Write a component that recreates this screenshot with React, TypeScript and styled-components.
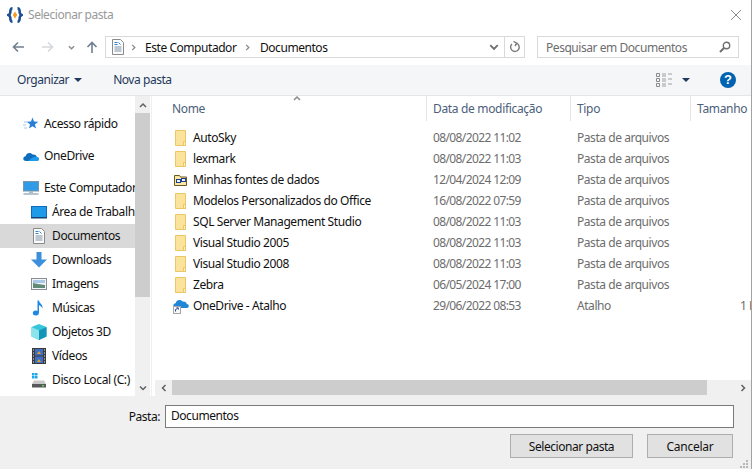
import styled, { createGlobalStyle } from 'styled-components'

const GlobalStyle = createGlobalStyle`
  html, body {
    margin: 0;
    padding: 0;
    background: #ffffff;
  }
  * {
    box-sizing: border-box;
  }
`

const Dialog = styled.div`
  position: relative;
  width: 752px;
  height: 469px;
  overflow: hidden;
  display: flex;
  flex-direction: column;
  background: #ffffff;
  border-right: 1px solid #a3a3a3;
  color: #000000;
  font-family: 'Noto Sans', 'Open Sans', sans-serif;
  font-size: 12px;
  letter-spacing: -0.45px;
  white-space: nowrap;
`

const TitleBar = styled.div`
  height: 30px;
  padding: 0 10px 0 7px;
  display: flex;
  align-items: center;
  gap: 5px;
  color: #999999;
`

const TitleText = styled.span`
  flex: 1;
  margin-bottom: 2px;
`

const NavBar = styled.div`
  height: 35px;
  padding: 6px 13px 7px 0;
  display: flex;
  align-items: center;
`

const NavButtons = styled.div`
  width: 105px;
  flex: none;
  position: relative;
  height: 22px;
  display: flex;
  align-items: center;
  padding-left: 12px;
`

const NavSlot = styled.span<{ $w: number }>`
  width: ${(p) => p.$w}px;
  flex: none;
  display: flex;
  align-items: center;
`

const AddressBox = styled.div`
  width: 420px;
  height: 22px;
  flex: none;
  border: 1px solid #d9d9d9;
  display: flex;
  align-items: center;
  padding-left: 4px;
`

const Crumb = styled.span<{ $w: number }>`
  width: ${(p) => p.$w}px;
  flex: none;
  color: #111111;
`

const CrumbArrow = styled.span<{ $left: number; $w: number }>`
  width: ${(p) => p.$w}px;
  margin-left: ${(p) => p.$left}px;
  flex: none;
  display: flex;
`

const AddressFill = styled.span`
  flex: 1;
`

const AddressTail = styled.span`
  width: 20px;
  height: 100%;
  flex: none;
  display: flex;
  align-items: center;
  justify-content: center;
`

const RefreshCell = styled(AddressTail)`
  border-left: 1px solid #d9d9d9;
`

const SearchBox = styled.div`
  width: 202px;
  height: 22px;
  margin-left: 12px;
  flex: none;
  border: 1px solid #d9d9d9;
  display: flex;
  align-items: center;
  justify-content: space-between;
  padding: 0 7px 0 8px;
  color: #6d6d6d;
`

const ToolBar = styled.div`
  height: 31px;
  padding: 0 15px 1px 17px;
  display: flex;
  align-items: center;
  background: #f5f6f7;
  border-bottom: 1px solid #e6e6e6;
  color: #1e395b;
`

const ToolLabel = styled.span`
  flex: none;
`

const Caret = styled.span<{ $left: number }>`
  width: 0;
  height: 0;
  margin-left: ${(p) => p.$left}px;
  flex: none;
  border-left: 4px solid transparent;
  border-right: 4px solid transparent;
  border-top: 4px solid #1e395b;
`

const NewFolder = styled(ToolLabel)`
  margin-left: 31px;
`

const ToolFill = styled.span`
  flex: 1;
`

const HelpBadge = styled.span`
  width: 16px;
  height: 16px;
  margin-left: 30px;
  flex: none;
  border-radius: 50%;
  background: #0063b1;
  color: #ffffff;
  font-family: 'Liberation Sans', sans-serif;
  font-size: 13px;
  font-weight: 700;
  letter-spacing: 0;
  line-height: 16px;
  text-align: center;
`

const Main = styled.div`
  height: 300px;
  display: flex;
  flex: none;
`

const Sidebar = styled.nav`
  width: 135px;
  flex: none;
  padding-top: 16px;
  overflow: hidden;
`

const TreeItem = styled.div<{ $child?: boolean; $selected?: boolean; $gap?: boolean }>`
  height: 24px;
  margin-top: ${(p) => (p.$gap ? 8 : 0)}px;
  padding-left: ${(p) => (p.$child ? 31 : 23)}px;
  padding-bottom: 2px;
  display: flex;
  align-items: center;
  gap: 5px;
  background: ${(p) => (p.$selected ? '#d9d9d9' : 'transparent')};
  color: #111111;
  letter-spacing: -0.38px;
`

const TreeIcon = styled.span`
  width: 16px;
  height: 16px;
  margin-top: 2px;
  flex: none;
  display: flex;
`

const VScroll = styled.div`
  width: 15px;
  flex: none;
  display: flex;
  flex-direction: column;
  background: #f0f0f0;
`

const ScrollEnd = styled.div<{ $w?: number }>`
  width: ${(p) => p.$w ?? 15}px;
  height: ${(p) => (p.$w ? 15 : 17)}px;
  flex: none;
  display: flex;
  align-items: center;
  justify-content: center;
`

const VThumb = styled.div`
  height: 184px;
  flex: none;
  background: #cdcdcd;
`

const VTrack = styled.div`
  flex: 1;
`

const FilePane = styled.section`
  margin-left: 1px;
  flex: 1;
  min-width: 0;
  display: flex;
  flex-direction: column;
  border-left: 1px solid #f0f0f0;
  padding-left: 2px;
`

const Columns = styled.div`
  position: relative;
  display: grid;
  grid-template-columns: 273px 144px 120px 100px;
  flex: none;
`

const HeaderRow = styled(Columns)`
  height: 25px;
  color: #4c607a;
  letter-spacing: -0.33px;
`

const HeaderCell = styled.div<{ $first?: boolean }>`
  padding-left: ${(p) => (p.$first ? 18 : 6)}px;
  border-right: 1px solid #e5e5e5;
  line-height: 25px;
  overflow: hidden;
`

const SortMark = styled.span`
  position: absolute;
  left: 139px;
  top: -2px;
  display: flex;
`

const FileList = styled.div`
  flex: 1;
  padding-top: 6px;
  overflow: hidden;
`

const FileRow = styled(Columns)`
  height: 21px;
  line-height: 21px;
  color: #6d6d6d;
`

const NameCell = styled.div`
  padding-left: 19px;
  display: flex;
  align-items: center;
  gap: 4px;
  color: #111111;
  letter-spacing: -0.4px;
`

const DateCell = styled.div`
  padding-left: 6px;
  overflow: hidden;
  letter-spacing: -0.62px;
`

const TypeCell = styled.div`
  padding-left: 6px;
  overflow: hidden;
`

const SizeCell = styled.div`
  padding-left: 49px;
  overflow: hidden;
`

const HScroll = styled.div`
  height: 16px;
  margin-left: 1px;
  flex: none;
  display: flex;
  background: #f0f0f0;
`

const HThumb = styled.div`
  width: 535px;
  height: 15px;
  flex: none;
  background: #cdcdcd;
`

const Footer = styled.footer`
  flex: 1;
  background: #f0f0f0;
  padding: 9px 17px 0 0;
  display: flex;
  flex-direction: column;
`

const PathRow = styled.div`
  height: 23px;
  display: flex;
  align-items: center;
  gap: 5px;
`

const PathLabel = styled.label`
  width: 160px;
  text-align: right;
  color: #111111;
`

const PathInput = styled.div`
  flex: 1;
  height: 23px;
  padding-left: 5px;
  line-height: 19px;
  background: #ffffff;
  border: 1px solid #7a7a7a;
  color: #111111;
`

const ButtonRow = styled.div`
  margin-top: 6px;
  padding-right: 1px;
  display: flex;
  justify-content: flex-end;
  gap: 14px;
`

const DialogButton = styled.button<{ $w: number; $tight?: boolean }>`
  width: ${(p) => p.$w}px;
  height: 24px;
  padding: 0;
  background: #e1e1e1;
  border: 1px solid #adadad;
  font: inherit;
  letter-spacing: ${(p) => (p.$tight ? '-0.45px' : '-0.25px')};
  color: #111111;
`

const Grip = styled.svg`
  position: absolute;
  right: 2px;
  bottom: 0;
`

const Chevron = ({ dir, color = '#6b6b6b', size = 8 }: { dir: 'up' | 'down' | 'left' | 'right'; color?: string; size?: number }) => {
  const d = {
    up: 'M1 6l3-3 3 3',
    down: 'M1 2.500l3 3 3-3',
    left: 'M5.500 1l-3 3 3 3',
    right: 'M2.500 1l3 3-3 3',
  }[dir]
  return (
    <svg width={size} height={size} viewBox="0 0 8 8" fill="none" stroke={color} strokeWidth="1.500">
      <path d={d} />
    </svg>
  )
}

const Arrow = ({ dir, color }: { dir: 'left' | 'right' | 'up'; color: string }) => {
  const d = {
    left: 'M12 6H1.500M6 1.500L1.500 6 6 10.500',
    right: 'M0 6h10.500M6 1.500L10.500 6 6 10.500',
    up: 'M6 12V1.500M1.500 6L6 1.500 10.500 6',
  }[dir]
  return (
    <svg width="12" height="12" viewBox="0 0 12 12" fill="none" stroke={color} strokeWidth="1.600">
      <path d={d} />
    </svg>
  )
}

const AppLogo = () => (
  <svg width="16" height="16" viewBox="0 0 16 16">
    <path d="M5.500 1.300C2.600 1.300 3.600 5 3.100 6.300 2.800 7.200 2 7.700 1.300 8c.7.300 1.500.8 1.800 1.700.5 1.300-.5 5 2.400 5" fill="none" stroke="#1d4f91" strokeWidth="2.600" />
    <path d="M10.500 1.300c2.900 0 1.900 3.700 2.400 5 .3.900 1.100 1.400 1.800 1.700-.7.300-1.500.8-1.800 1.700-.5 1.300.5 5-2.400 5" fill="none" stroke="#1d4f91" strokeWidth="2.600" />
    <path d="M8 4.500L10.200 8 8 11.500 5.800 8z" fill="#f59a23" />
  </svg>
)

const DocIcon = ({ size = 16 }: { size?: number }) => (
  <svg width={size} height={size} viewBox="0 0 16 16">
    <path d="M2.500.5h8l3 3v12h-11z" fill="#fbfbfb" stroke="#8a8a8a" />
    <path d="M4.500 3.500h3M4.500 5.500h3" stroke="#2f86d6" />
    <path d="M4.500 8h7M4.500 10h7M4.500 12h7" stroke="#7c93a8" />
    <path d="M8.500 3.500l2 2" stroke="#2f86d6" />
  </svg>
)

const FolderIcon = () => (
  <svg width="16" height="16" viewBox="0 0 16 16">
    <path d="M2.500 .5h10v15h-10z" fill="#fce39b" stroke="#eac766" />
    <path d="M10.500 11.500h2v4h-2z" fill="#fff0c0" stroke="#eac766" />
  </svg>
)

const DataFolderIcon = () => (
  <svg width="16" height="16" viewBox="0 0 16 16">
    <path d="M1.500 3.500h5l1 1.500h6v8.500h-12z" fill="#fbe6a5" stroke="#6a5a20" />
    <rect x="3.500" y="7.500" width="4" height="3" fill="#f4f4f4" stroke="#1d3d8f" />
    <rect x="8.500" y="6.500" width="4" height="3" fill="#f4f4f4" stroke="#1d3d8f" />
  </svg>
)

const CloudIcon = () => (
  <svg width="16" height="16" viewBox="0 0 16 16">
    <path d="M3.200 13C1.500 13 .3 12 .3 10.700S1.300 8.400 2.600 8.300C3 6.200 4.700 5 6.500 5c1.300 0 2.400.6 3.100 1.600C11.800 6 13.500 7.300 13.800 9c1.200.1 2 .9 2 2s-.8 2-2 2z" fill="#0f6cbd" />
    <path d="M5 13l4.600-3.400c1.500-1.100 3-1 4.200-.6 1.200.1 2 .9 2 2s-.8 2-2 2z" fill="#1e9be8" />
  </svg>
)

const StarIcon = () => (
  <svg width="16" height="16" viewBox="0 0 16 16">
    <path d="M9.500 1.500l1.500 4 4.300.2-3.400 2.700 1.200 4.200-3.600-2.400-3.600 2.400 1.200-4.200-3.400-2.700 4.300-.2z" fill="#2a7fd4" />
    <path d="M1 6h3M0 9h3M1 12h3" stroke="#9ccbf0" />
  </svg>
)

const ComputerIcon = () => (
  <svg width="16" height="16" viewBox="0 0 16 16">
    <rect x=".5" y="1.500" width="15" height="9.500" fill="#2f9ae6" stroke="#7a94aa" />
    <path d="M6 11h4v2H6z" fill="#a7bccb" />
    <path d="M.5 14h15" stroke="#9cb0c0" strokeWidth="1.500" />
  </svg>
)

const DesktopIcon = () => (
  <svg width="16" height="16" viewBox="0 0 16 16">
    <rect x=".5" y="2.500" width="15" height="11" fill="#1e9be8" stroke="#0f6cbd" />
    <path d="M0 13h16v1.500H0z" fill="#11446f" />
  </svg>
)

const DownloadIcon = () => (
  <svg width="16" height="16" viewBox="0 0 16 16">
    <path d="M5.500 0h5v7.500H16L8 15.500 0 7.500h5.500z" fill="#3b8fdc" />
  </svg>
)

const PicturesIcon = () => (
  <svg width="16" height="16" viewBox="0 0 16 16">
    <rect x=".5" y="2.500" width="15" height="11" fill="#f4f4f4" stroke="#8a8f96" />
    <path d="M2 4h12v3H2z" fill="#a9c8e8" />
    <path d="M2 7l5 1 7 1v3H2z" fill="#5f8a78" />
  </svg>
)

const MusicIcon = () => (
  <svg width="16" height="16" viewBox="0 0 16 16">
    <ellipse cx="4.800" cy="13" rx="3" ry="2.500" fill="#1e88e5" />
    <path d="M6.500 13V.5h1.500c.3 3 4 3.500 3.500 8-.8-2-2.600-3-3.500-3.300V13z" fill="#1e88e5" />
  </svg>
)

const CubeIcon = () => (
  <svg width="16" height="16" viewBox="0 0 16 16">
    <path d="M8 0l7.500 3v9.500L8 16 .5 12.500V3z" fill="#37c6d9" />
    <path d="M8 6.500l7.500-3.500v9.500L8 16z" fill="#1595b5" />
    <path d="M.5 3L8 6.500V16L.5 12.500z" fill="#8be3ec" />
  </svg>
)

const VideoIcon = () => (
  <svg width="16" height="16" viewBox="0 0 16 16">
    <rect x="1" y="0" width="14" height="16" fill="#3b3b3b" />
    <rect x="4" y="1" width="8" height="6.500" fill="#3f6fc4" />
    <rect x="4" y="8.500" width="8" height="6.500" fill="#3f6fc4" />
    <path d="M6 6l2-3 2 3zM6 14l2-3 2 3z" fill="#d9a326" />
    <path d="M2 2h1M2 5h1M2 8h1M2 11h1M2 14h1M13 2h1M13 5h1M13 8h1M13 11h1M13 14h1" stroke="#e8e8e8" />
  </svg>
)

const DiskIcon = () => (
  <svg width="16" height="16" viewBox="0 0 16 16">
    <path d="M1 1h2.500v2.500H1zM4 1h2.500v2.500H4zM1 4h2.500v2.500H1zM4 4h2.500v2.500H4z" fill="#18a6ee" />
    <path d="M3 8.500h10L15 12H1z" fill="#c9c9c9" />
    <rect x="1" y="12" width="14" height="3.500" fill="#595959" />
    <rect x="11" y="13" width="2" height="1.500" fill="#5fd35f" />
  </svg>
)

const ShortcutCloudIcon = () => (
  <svg width="16" height="16" viewBox="0 0 16 16">
    <path d="M3.200 10C1.500 10 .3 9 .3 7.700S1.300 5.400 2.600 5.300C3 3.200 4.700 2 6.500 2c1.300 0 2.400.6 3.100 1.600C11.800 3 13.500 4.300 13.800 6c1.200.1 2 .9 2 2s-.8 2-2 2z" fill="#1e88d8" />
    <rect x=".5" y="8.500" width="7" height="7" fill="#f6f6f6" stroke="#a7a7a7" />
    <path d="M2.500 13.500v-2l2-1M3.500 9.800h1.800v1.800" fill="none" stroke="#1d4f91" />
  </svg>
)

const ViewsIcon = () => (
  <svg width="16" height="16" viewBox="0 0 16 16" fill="none" stroke="#8a8a8a">
    <path d="M.5 1.500h3v3h-3zM.5 6.500h3v3h-3zM.5 11.500h3v3h-3z" />
    <path d="M6 2h4M6 4h4M6 7h4M6 9h4M6 12h4M6 14h4M12 2h4M12 7h4M12 12h4" stroke="#a0a0a0" />
  </svg>
)

const RefreshIcon = () => (
  <svg width="12" height="12" viewBox="0 0 12 12" fill="none" stroke="#7a7a7a" strokeWidth="1.400">
    <path d="M7.500 2.200A4.300 4.300 0 1 1 3 3" />
    <path d="M4.500.5L7.800 2.200 6 5" />
  </svg>
)

const SearchIcon = () => (
  <svg width="12" height="12" viewBox="0 0 12 12" fill="none" stroke="#6f6f6f">
    <circle cx="7.500" cy="4.500" r="3.200" strokeWidth="1.400" />
    <path d="M5 7L1 11" strokeWidth="2" />
  </svg>
)

const CloseIcon = () => (
  <svg width="10" height="10" viewBox="0 0 10 10" fill="none" stroke="#8f8f8f">
    <path d="M0 0l10 10M10 0L0 10" />
  </svg>
)

const treeItems = [
  { label: 'Acesso rápido', icon: <StarIcon />, gap: false, child: false },
  { label: 'OneDrive', icon: <CloudIcon />, gap: true, child: false },
  { label: 'Este Computador', icon: <ComputerIcon />, gap: true, child: false },
  { label: 'Área de Trabalho', icon: <DesktopIcon />, gap: false, child: true },
  { label: 'Documentos', icon: <DocIcon />, gap: false, child: true, selected: true },
  { label: 'Downloads', icon: <DownloadIcon />, gap: false, child: true },
  { label: 'Imagens', icon: <PicturesIcon />, gap: false, child: true },
  { label: 'Músicas', icon: <MusicIcon />, gap: false, child: true },
  { label: 'Objetos 3D', icon: <CubeIcon />, gap: false, child: true },
  { label: 'Vídeos', icon: <VideoIcon />, gap: false, child: true },
  { label: 'Disco Local (C:)', icon: <DiskIcon />, gap: false, child: true },
]

const files = [
  { name: 'AutoSky', date: '08/08/2022 11:02', type: 'Pasta de arquivos', icon: <FolderIcon /> },
  { name: 'lexmark', date: '08/08/2022 11:03', type: 'Pasta de arquivos', icon: <FolderIcon /> },
  { name: 'Minhas fontes de dados', date: '12/04/2024 12:09', type: 'Pasta de arquivos', icon: <DataFolderIcon /> },
  { name: 'Modelos Personalizados do Office', date: '16/08/2022 07:59', type: 'Pasta de arquivos', icon: <FolderIcon /> },
  { name: 'SQL Server Management Studio', date: '08/08/2022 11:03', type: 'Pasta de arquivos', icon: <FolderIcon /> },
  { name: 'Visual Studio 2005', date: '08/08/2022 11:03', type: 'Pasta de arquivos', icon: <FolderIcon /> },
  { name: 'Visual Studio 2008', date: '08/08/2022 11:03', type: 'Pasta de arquivos', icon: <FolderIcon /> },
  { name: 'Zebra', date: '06/05/2024 17:00', type: 'Pasta de arquivos', icon: <FolderIcon /> },
  { name: 'OneDrive - Atalho', date: '29/06/2022 08:53', type: 'Atalho', size: '1 KB', icon: <ShortcutCloudIcon /> },
]

export default function App() {
  return (
    <Dialog>
      <GlobalStyle />
      <TitleBar>
        <AppLogo />
        <TitleText>Selecionar pasta</TitleText>
        <CloseIcon />
      </TitleBar>

      <NavBar>
        <NavButtons>
          <NavSlot $w={30}><Arrow dir="left" color="#6f7f8f" /></NavSlot>
          <NavSlot $w={26}><Arrow dir="right" color="#d5d9dd" /></NavSlot>
          <NavSlot $w={18}><Chevron dir="down" color="#8a8a8a" size={7} /></NavSlot>
          <NavSlot $w={12}><Arrow dir="up" color="#6f7f8f" /></NavSlot>
        </NavButtons>
        <AddressBox>
          <DocIcon />
          <CrumbArrow $left={4} $w={15}><Chevron dir="right" color="#8a8a8a" size={7} /></CrumbArrow>
          <Crumb $w={89}>Este Computador</Crumb>
          <CrumbArrow $left={10} $w={16}><Chevron dir="right" color="#8a8a8a" size={7} /></CrumbArrow>
          <Crumb $w={80}>Documentos</Crumb>
          <AddressFill />
          <AddressTail><Chevron dir="down" color="#6f6f6f" size={10} /></AddressTail>
          <RefreshCell><RefreshIcon /></RefreshCell>
        </AddressBox>
        <SearchBox>
          <span>Pesquisar em Documentos</span>
          <SearchIcon />
        </SearchBox>
      </NavBar>

      <ToolBar>
        <ToolLabel>Organizar</ToolLabel>
        <Caret $left={5} />
        <NewFolder>Nova pasta</NewFolder>
        <ToolFill />
        <ViewsIcon />
        <Caret $left={10} />
        <HelpBadge>?</HelpBadge>
      </ToolBar>

      <Main>
        <Sidebar>
          {treeItems.map((item) => (
            <TreeItem key={item.label} $child={item.child} $gap={item.gap} $selected={item.selected}>
              <TreeIcon>{item.icon}</TreeIcon>
              {item.label}
            </TreeItem>
          ))}
        </Sidebar>
        <VScroll>
          <ScrollEnd><Chevron dir="up" color="#606060" /></ScrollEnd>
          <VThumb />
          <VTrack />
          <ScrollEnd><Chevron dir="down" color="#606060" /></ScrollEnd>
        </VScroll>
        <FilePane>
          <HeaderRow>
            <HeaderCell $first>Nome</HeaderCell>
            <HeaderCell>Data de modificação</HeaderCell>
            <HeaderCell>Tipo</HeaderCell>
            <HeaderCell>Tamanho</HeaderCell>
            <SortMark><Chevron dir="up" color="#8a8a8a" /></SortMark>
          </HeaderRow>
          <FileList>
            {files.map((file) => (
              <FileRow key={file.name}>
                <NameCell>{file.icon}{file.name}</NameCell>
                <DateCell>{file.date}</DateCell>
                <TypeCell>{file.type}</TypeCell>
                <SizeCell>{file.size}</SizeCell>
              </FileRow>
            ))}
          </FileList>
          <HScroll>
            <ScrollEnd $w={17}><Chevron dir="left" color="#606060" /></ScrollEnd>
            <HThumb />
            <VTrack />
            <ScrollEnd $w={17}><Chevron dir="right" color="#606060" /></ScrollEnd>
          </HScroll>
        </FilePane>
      </Main>

      <Footer>
        <PathRow>
          <PathLabel>Pasta:</PathLabel>
          <PathInput>Documentos</PathInput>
        </PathRow>
        <ButtonRow>
          <DialogButton $w={123} $tight>Selecionar pasta</DialogButton>
          <DialogButton $w={86}>Cancelar</DialogButton>
        </ButtonRow>
      </Footer>

      <Grip width="10" height="10" viewBox="0 0 10 10" fill="#b8b8b8">
        <path d="M7 1h2v2H7zM4 4h2v2H4zM7 4h2v2H7zM1 7h2v2H1zM4 7h2v2H4zM7 7h2v2H7z" />
      </Grip>
    </Dialog>
  )
}
